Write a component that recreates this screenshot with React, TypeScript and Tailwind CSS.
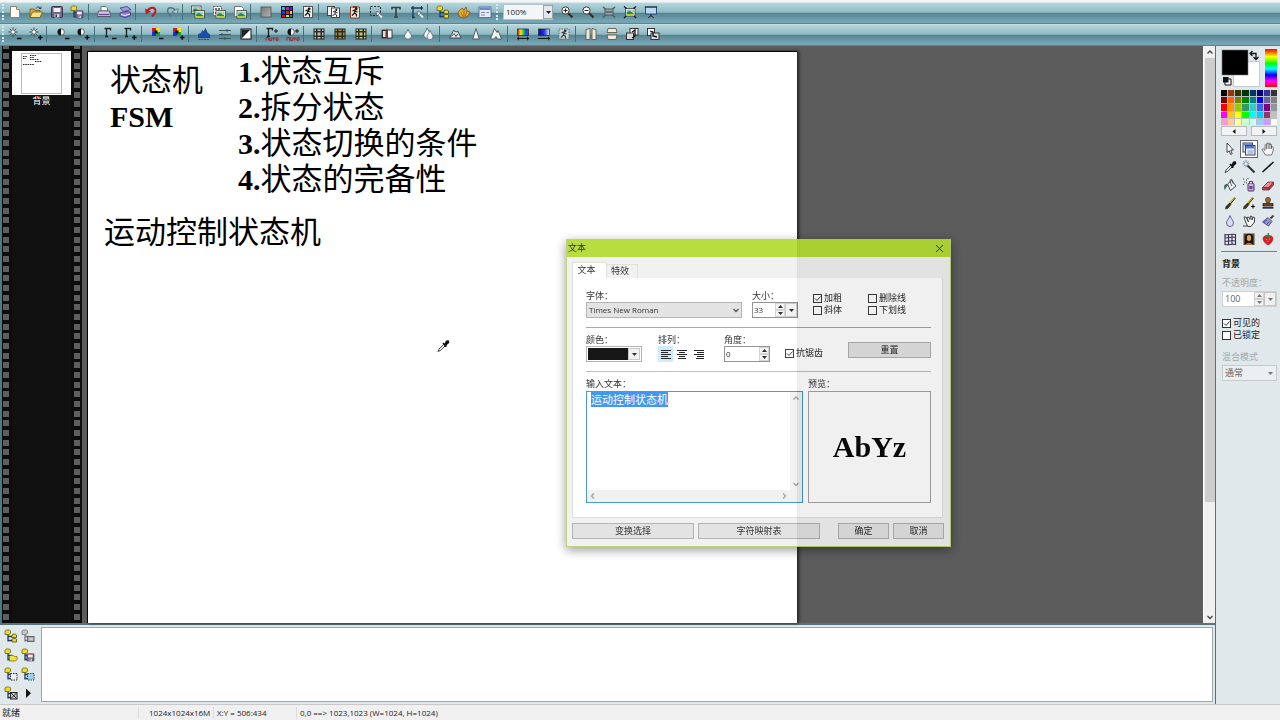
import React, { useEffect, useRef } from 'react';
import clsx from 'clsx';

/* ---------- small shared glyph parts (14x14 grid) ---------- */

const Doc = () => (
  <>
    <path d="M2.5 1.5h6l3 3v8h-9z" fill="#fbfaf3" stroke="#8b8772" />
    <path d="M8.500 1.500v3h3" fill="#e4e0cc" stroke="#8b8772" />
  </>
);

const Landscape = ({ x = 4, y = 5 }: { x?: number; y?: number }) => (
  <g transform={`translate(${x} ${y})`}>
    <rect width="9.500" height="7.500" fill="#fff" stroke="#39422e" strokeWidth=".8" />
    <rect x="1" y="1" width="7.500" height="3" fill="#8cc3ea" />
    <path d="M1 4l3-1.500L8.500 5v1.500H1z" fill="#2f8a35" />
    <path d="M1 5.500h7.500v1H1z" fill="#b8cf3a" />
    <circle cx="6.500" cy="2.200" r=".8" fill="#ffe14d" />
  </g>
);

const Floppy = ({ x = 1, y = 1, s = 1 }: { x?: number; y?: number; s?: number }) => (
  <g transform={`translate(${x} ${y}) scale(${s})`}>
    <rect x=".5" y=".5" width="11" height="11" rx="1" fill="#6d6585" stroke="#3b3450" />
    <rect x="2.500" y="1" width="7" height="5" fill="#f5eeee" />
    <path d="M2.500 1.500h7" stroke="#b04a4a" />
    <rect x="3.500" y="8" width="5" height="3.500" fill="#d5d5de" />
    <rect x="4.500" y="8.500" width="1.500" height="2.500" fill="#3b3450" />
  </g>
);

const Branch = ({ gray = false }: { gray?: boolean }) => (
  <>
    <path d="M4 5v7.500M4 7.500h4M4 11.500h4" stroke={gray ? '#777' : '#1c3a63'} fill="none" strokeWidth="1.300" />
    <path d="M1 2l1.500-1h3l1 1v2.500L5 5.500H1z" fill={gray ? '#c5c5c5' : '#f0dc28'} stroke={gray ? '#777' : '#6c6310'} strokeWidth=".8" />
  </>
);

const Runner = () => (
  <g fill="none" stroke="#111" strokeWidth="1.100">
    <circle cx="8.200" cy="3.800" r=".8" fill="#111" />
    <path d="M4.500 6l2-1 1.500 1.500 1.500.5M7 5.500L6.500 8l2 1.500v2M6.500 8L4 10.500" />
  </g>
);

const Grid = ({ c }: { c: string }) => (
  <>
    <rect x="1.500" y="1.500" width="11" height="11" fill="#2b2b20" />
    <path d="M2.500 2.500h1.500v1.500H2.500zM5.500 2.500h3v1.500h-3zM10 2.500h1.500v1.500H10zM2.500 5.500h1.500v3H2.500zM5.500 5.500h3v3h-3zM10 5.500h1.500v3H10zM2.500 10h1.500v1.500H2.500zM5.500 10h3v1.500h-3zM10 10h1.500v1.500H10z" fill={c} />
  </>
);

const Quad = () => (
  <>
    <path d="M2 1h4v4H2z" fill="#d91616" /><path d="M6 1h4v4H6z" fill="#f5e021" />
    <path d="M2 5h4v4H2z" fill="#1b2fe0" /><path d="M6 5h4v4H6z" fill="#19a32a" />
    <path d="M4.500 3.500h3v3h-3z" fill="#111" />
  </>
);

const Minus = () => <path d="M9 11.500h4.500" stroke="#0b1416" strokeWidth="1.500" />;
const Plus = () => <path d="M9 10.500h4.500M11.250 8.200v4.600" stroke="#0b1416" strokeWidth="1.500" />;

const Sun = () => (
  <>
    <circle cx="5" cy="5" r="2.200" fill="#fff" stroke="#222" strokeWidth=".7" />
    <path d="M5 .5v1.300M5 8.200v1.300M.5 5h1.300M8.200 5h1.300M1.800 1.800l.9.9M7.300 7.300l.9.9M1.800 8.200l.9-.9M7.300 2.700l.9-.9" stroke="#222" strokeWidth=".9" />
  </>
);

const Half = () => (
  <>
    <circle cx="5" cy="5" r="3.300" fill="#fff" stroke="#111" strokeWidth=".6" />
    <path d="M5 1.700a3.300 3.300 0 0 0 0 6.600z" fill="#111" />
  </>
);

const Gamma = () => <path d="M1.500 1.500h6v2M3.500 1.500v8M2 9.500h3" fill="none" stroke="#1b2426" strokeWidth="1.400" />;

const Auto = () => <path d="M1 10.500h2.500v3M1 10.500v3M4.700 10.500v3h2v-3M7.500 11h2.500M8.700 11v2.500M11 10.800h2v2.500h-2z" fill="none" stroke="#9c1f2c" strokeWidth=".9" />;

const Lens = () => (
  <>
    <path d="M8 8l4.500 4.500" stroke="#3c2d14" strokeWidth="2.200" />
    <circle cx="5.500" cy="5.500" r="3.600" fill="#fbfdff" stroke="#3c3c3c" />
  </>
);

const Drop = () => <path d="M7 1.500C8 5 10.500 6.500 10.500 9a3.500 3.500 0 0 1-7 0C3.500 6.500 6 5 7 1.500z" fill="#f2f5f5" stroke="#495a60" strokeWidth=".8" />;

const Brush = () => (
  <>
    <path d="M12 1.500L6.500 8" stroke="#b5a832" strokeWidth="2" />
    <path d="M12.500 2L7 8.500" stroke="#1c1c1c" strokeWidth=".8" />
    <path d="M6.500 7l1.500 1.500-3 3.800-2.500.7.500-2.500z" fill="#3a3414" stroke="#111" strokeWidth=".5" />
  </>
);

const glyphs: Record<string, React.ReactNode> = {
  new: <Doc />,
  open: <><path d="M1 4h4l1 1.500h5v7H1z" fill="#d9a938" stroke="#73571a" strokeWidth=".8" /><path d="M1 12.500L3.500 7h10L11 12.500z" fill="#fbe07e" stroke="#73571a" strokeWidth=".8" /><path d="M7 3.500c1-2 3.500-2 4.500 0M10 3.500h2v-2" fill="none" stroke="#222" strokeWidth=".8" /></>,
  save: <Floppy />,
  saveTree: <><Branch /><Floppy x={5.500} y={5.500} s={0.65} /></>,
  print: <><path d="M4 6V1.500h5L10.500 3v3z" fill="#fff" stroke="#555" strokeWidth=".8" /><path d="M1.500 6h11l1 5.500H.5z" fill="#d6cfe3" stroke="#4b3f62" strokeWidth=".8" /><path d="M2 9.500h10" stroke="#6c4a93" strokeWidth="1.500" /></>,
  scan: <><path d="M2 3l7-1.500 4 3L6 6.500z" fill="#a79be0" stroke="#46358b" strokeWidth=".8" /><path d="M2 8l5-1.500 5.500.5v3.500L7 12.500 2 11z" fill="#8a79cc" stroke="#46358b" strokeWidth=".8" /><path d="M3 9.500l4 1 5-1.500" stroke="#fff" fill="none" strokeWidth=".9" /></>,
  undo: <><path d="M3.500 6.500C5 2 11 1.500 11.500 5.500c.3 2.500-2 4-3.500 6" fill="none" stroke="#c01820" strokeWidth="1.900" /><path d="M1 3.500l.8 5.500L7 6.800z" fill="#c01820" /></>,
  redo: <><path d="M10.500 6.500C9 2 3 1.500 2.500 5.500c-.3 2.500 2 4 3.500 6" fill="none" stroke="#54757f" strokeWidth="1.400" /><path d="M13 3.500L12.200 9 7 6.800z" fill="#b4cdd4" stroke="#54757f" strokeWidth=".8" /></>,
  pics: <><Landscape x={0.5} y={1} /><Landscape x={4} y={5.500} /></>,
  picGrid: <><path d="M1.500 1.500h8v9h-8z" fill="#fff" stroke="#555" strokeDasharray="2 1" /><path d="M3 3h2v2H3zM6 3h2v2H6zM3 7h2v2H3z" fill="#667" /><Landscape x={4} y={5.500} /></>,
  picDoc: <><path d="M1.500 1.500h7l2 2v8h-9z" fill="#fff" stroke="#777" /><Landscape x={4} y={5.500} /></>,
  shade: <><defs><linearGradient id="shade" x1="0" y1="0" x2="1" y2="1"><stop stopColor="#777" /><stop offset="1" stopColor="#b5b5b5" /></linearGradient></defs><rect x="2" y="2" width="10" height="10" fill="url(#shade)" stroke="#4c5255" strokeWidth=".8" /></>,
  palette: <><rect x="1" y="1" width="12" height="12" fill="#14142c" /><path d="M2 2h3v3H2z" fill="#20c2c8" /><path d="M6 2h3v3H6z" fill="#d5188b" /><path d="M10 2h2v3h-2z" fill="#2434d8" /><path d="M2 6h3v3H2z" fill="#2434d8" /><path d="M6 6h3v3H6z" fill="#e22020" /><path d="M10 6h2v3h-2z" fill="#f0d820" /><path d="M2 10h3v2H2z" fill="#c21a1a" /><path d="M6 10h3v2H6z" fill="#e8d820" /><path d="M10 10h2v2h-2z" fill="#22a832" /></>,
  runner: <><rect x="2.500" y="1.500" width="9" height="11" fill="#eee" stroke="#555" /><Runner /></>,
  runCopy: <><rect x=".5" y="1.500" width="7" height="9" fill="#eee" stroke="#444" /><rect x="4.500" y="3" width="8" height="9.500" fill="#fff" stroke="#444" /><g transform="translate(2 1.500) scale(.9)"><Runner /></g></>,
  runPaste: <><path d="M2.500 2h9v11h-9z" fill="#f2dfcf" stroke="#8b3c26" /><path d="M5 1h4v2H5z" fill="#8b3c26" /><Runner /></>,
  marquee: <><rect x="1.500" y="1.500" width="10" height="9" fill="none" stroke="#1c2c33" strokeDasharray="2 1.500" /><path d="M8.500 8l4.500 4.500" stroke="#e4e9ea" strokeWidth="1.800" /><path d="M7 6.500l4.500 1L8 11z" fill="#e4e9ea" stroke="#334" strokeWidth=".5" /></>,
  text: <path d="M3 4.500V2.500h8v2M7 2.500v9.500M5 12h4" fill="none" stroke="#33454b" strokeWidth="1.700" />,
  crop: <><path d="M3 1v12M1 3h12M2 12.500h3" stroke="#17384d" fill="none" strokeWidth="1.300" /><path d="M11.500 1v4" stroke="#17384d" /><path d="M8.500 8l4.500 4.500" stroke="#e4e9ea" strokeWidth="1.800" /><path d="M7 6.500l4.500 1L8 11z" fill="#e4e9ea" stroke="#334" strokeWidth=".5" /></>,
  tree: <><Branch /><path d="M8 6l1-.8h2.500l1 .8v2.700H8zM8 10.300l1-.8h2.500l1 .8v2.700H8z" fill="#f0dc28" stroke="#4d4708" strokeWidth=".8" /></>,
  shell: <><path d="M1 8c1-4 4-3 4-5l2 2 2-3 1 4 3 1-2 4-4 2-4-1z" fill="#efac35" stroke="#7b4e11" strokeWidth=".8" /><path d="M7 5v7M4 7l2 5M10 6l-2 6" stroke="#8b5a16" strokeWidth=".8" /></>,
  window: <><rect x="1" y="2" width="12" height="10.500" fill="#e7ecf8" stroke="#4b5f94" strokeWidth=".8" /><path d="M1.400 2.400h11.200v2.600H1.400z" fill="#6b8ad2" /><path d="M3 7.500h4M3 10h4M8.500 7.500h2.500" stroke="#7a89ab" /></>,
  zoomIn: <><Lens /><path d="M3.500 5.500h4M5.500 3.500v4" stroke="#222" /></>,
  zoomOut: <><Lens /><path d="M3.500 5.500h4" stroke="#222" /></>,
  fit: <><rect x="3" y="4" width="8" height="6" fill="#98a8ac" stroke="#4c5a5e" /><path d="M1 2l2.500 2M13 2l-2.500 2M1 12.500L3.500 10M13 12.500L10.500 10M4 7h6" stroke="#4c5a5e" strokeWidth="1.400" /></>,
  fitPic: <><Landscape x={2.500} y={3.500} /><path d="M1 1.500l2.500 2M13 1.500l-2.500 2M1 13l2-2M13 13l-2-2" stroke="#213" strokeWidth="1.300" /></>,
  screen: <><rect x="1.500" y="2" width="11" height="7" fill="#b8d8f4" stroke="#2c4a86" /><path d="M7 9v3M4 13l3-2.500L10 13M.8 2h12.400" stroke="#2b2b2b" fill="none" /></>,
  sunMinus: <><Sun /><Minus /></>,
  sunPlus: <><Sun /><Plus /></>,
  halfMinus: <><Half /><Minus /></>,
  halfPlus: <><Half /><Plus /></>,
  gammaMinus: <><Gamma /><Minus /></>,
  gammaPlus: <><Gamma /><Plus /></>,
  quadMinus: <><Quad /><Minus /></>,
  quadPlus: <><Quad /><Plus /></>,
  histogram: <><path d="M1.500 10.500V7.500L3 6.500l1 .5 1.500-3.500L7 5l1.500-3.500L10 5.500l2.500 2v3z" fill="#174fae" stroke="#0f3270" strokeWidth=".6" /><path d="M1.500 12.500h11" stroke="#3c4d55" strokeDasharray="2 .8" /></>,
  sliders: <path d="M1 3.500h12M1 7.500h12M1 11.500h12M9 2v3M4 6v3M7 10v3" stroke="#3d545c" fill="none" />,
  invert: <><rect x="2" y="2" width="10" height="10" fill="#fff" stroke="#111" /><path d="M2.500 2.500h9l-9 9z" fill="#222" /></>,
  gammaAuto: <><Gamma /><path d="M9 4h4M11 2v4" stroke="#111" /><Auto /></>,
  halfAuto: <><Half /><path d="M9 4h4M11 2v4" stroke="#111" /><Auto /></>,
  gridWhite: <Grid c="#b9c2c0" />,
  gridTan: <Grid c="#a58a48" />,
  gridOlive: <Grid c="#c4c683" />,
  split: <><rect x="2" y="3" width="4.500" height="8" fill="#444" stroke="#222" strokeWidth=".8" /><rect x="7.500" y="3" width="4.500" height="8" fill="#f6f6f6" stroke="#222" strokeWidth=".8" /><rect x="3" y="4" width="2.500" height="6" fill="#d9dede" /><path d="M7 1.500v11" stroke="#b33a14" /></>,
  drop: <g transform="translate(0 1) scale(1 .9)"><Drop /></g>,
  drops: <><g transform="translate(-1.500 -.5) scale(.95)"><Drop /></g><g transform="translate(2 2) scale(.85)"><Drop /></g></>,
  soften: <path d="M1.500 11L3.500 7.500l2-4L8 5l2-.5 3 6.500zM3.500 9.500L6 6.500l2 3 2-2.500" fill="#e8ecec" stroke="#2f3c40" strokeWidth=".9" />,
  sharpen: <path d="M7 1.500l3.200 10.500H3.800z" fill="#f2f4f4" stroke="#46555a" strokeWidth=".9" />,
  sharpen2: <path d="M5.500 1.500l2.500 4 1-2 3.500 8.500H8.500L7 9.500 5 12H1.500z" fill="#f2f4f4" stroke="#46555a" strokeWidth=".9" />,
  hue: <><defs><linearGradient id="hue"><stop stopColor="#e11" /><stop offset=".3" stopColor="#fe1" /><stop offset=".55" stopColor="#1c4" /><stop offset=".8" stopColor="#14e" /><stop offset="1" stopColor="#c1d" /></linearGradient></defs><rect x="1.500" y="2" width="11" height="6.500" fill="url(#hue)" stroke="#222" strokeWidth=".7" /><path d="M1 11.500h12M3 9.800L1.200 11.500 3 13.200M11 9.800l1.800 1.700L11 13.200" stroke="#111" fill="none" /></>,
  blueRamp: <><defs><linearGradient id="ramp"><stop stopColor="#0a10a8" /><stop offset=".5" stopColor="#1a2fe8" /><stop offset="1" stopColor="#e6eaff" /></linearGradient></defs><rect x="1.500" y="2" width="11" height="6.500" fill="url(#ramp)" stroke="#222" strokeWidth=".7" /><path d="M1 11.500h12M11 9.800l1.800 1.700L11 13.200" stroke="#111" fill="none" /></>,
  effect: <><rect x="2" y="2" width="10" height="10" fill="#c9d6da" stroke="#5c6c72" strokeDasharray="1.500 1" /><g opacity=".8"><Runner /></g></>,
  flipH: <path d="M2 2.500l4-1v11H2zM8 1.500l4 1v10H8z" fill="#efecdf" stroke="#625c48" strokeWidth=".9" />,
  flipV: <path d="M3 1.500h8l1 4H2zM2 8h10l-1 4.500H3z" fill="#efecdf" stroke="#625c48" strokeWidth=".9" />,
  rotL: <><rect x="5" y="1.500" width="8" height="6.500" fill="#fff" stroke="#333" /><rect x="1.500" y="6" width="7" height="6.500" fill="#ddd" stroke="#333" /><path d="M7 5l3-2v6L7 11" fill="none" stroke="#111" strokeWidth="1.300" /></>,
  rotR: <><rect x="1.500" y="1.500" width="7" height="7" fill="#fff" stroke="#333" /><rect x="5" y="6" width="8" height="6.500" fill="#ddd" stroke="#333" /><path d="M4 4l3 1v4l4 1" fill="none" stroke="#111" strokeWidth="1.300" /></>,
  arrow: <path d="M4 1l6.500 7H7.700l1.500 3.800-1.500.7L6.200 8.800 4 10.500z" fill="#fff" stroke="#333" strokeWidth=".9" />,
  objects: <><rect x="1" y="1" width="9.500" height="9" fill="#dfe6f6" stroke="#35477c" /><path d="M1.500 1.500H10v2H1.500z" fill="#6d88cc" /><rect x="3.500" y="3.500" width="9.500" height="9.500" fill="#e9eefb" stroke="#35477c" /><path d="M4 4h8.500v2.500H4z" fill="#5876c2" /><path d="M5.500 9h6M5.500 11h6" stroke="#8898c0" /></>,
  hand: <path d="M4.500 13L1.200 8c-.5-1 .8-1.700 1.600-.6L4 8.500V3.500c0-1.200 1.500-1.200 1.500 0V2c0-1.200 1.700-1.200 1.700 0v-.2c0-1.200 1.700-1.200 1.700 0V3c0-1.200 1.600-1.200 1.600 0v2.500c0-1.200 1.700-1.200 1.700 0V9l-1.700 4zM5.500 3.500V7M7.200 2v5M8.900 2v5M10.500 4v3" fill="#f8f8f8" stroke="#555" strokeWidth=".8" />,
  dropper: <><path d="M2 12.500l1-2.500L8 5l1.500 1.500-5 5z" fill="#e9e9e9" stroke="#222" strokeWidth=".8" /><path d="M7 4l3.500 3.500M9 6l1.500-3.500L12 2l.5 1.500-3.500 3z" stroke="#111" strokeWidth="1.600" fill="#111" /></>,
  wand: <><path d="M5.500 5.500l7 7" stroke="#26323a" strokeWidth="2" /><path d="M4 0v7.500M.5 3.800h7M1.500 1.300l5 5M6.500 1.300l-5 5" stroke="#5b6f9c" strokeWidth=".8" /><circle cx="4" cy="3.800" r="1.200" fill="#fff" /></>,
  line: <path d="M1.500 12L12.500 2" stroke="#111" strokeWidth="1.500" />,
  bucket: <><path d="M4.500 6l4-3.500L13 8l-5.500 4.500z" fill="#eef2f3" stroke="#333" strokeWidth=".9" /><path d="M9 8C7 5 6.500 1.500 8 1.200S10 4 10 5.500" fill="none" stroke="#333" strokeWidth=".8" /><path d="M4.500 6C1 6 .8 8 1.500 12c1.500-1 1.500-4 4-4.500" fill="#35695e" /></>,
  spray: <><rect x="6" y="5.500" width="6" height="7.500" rx="1" fill="#c6b0d8" stroke="#4a2c5e" /><path d="M7.500 5.500v-2h3v2" fill="#fff" stroke="#4a2c5e" /><path d="M7.500 8h3v3h-3z" fill="#6e3d91" /><path d="M1 1h1M4 2h1M2 4h1M4 5h1M1 6.500h1M5.500.5h1" stroke="#333" /></>,
  eraser: <><path d="M1.500 9.500L7 4h5.500L8 9.500z" fill="#e48f95" stroke="#7c2b31" strokeWidth=".8" /><path d="M1.500 9.500H8v2.500H1.500zM8 12l4.500-5V4L8 9.500z" fill="#b0454e" stroke="#7c2b31" strokeWidth=".8" /></>,
  brush: <Brush />,
  brushPlus: <><g transform="translate(-1 0)"><Brush /></g><path d="M9 10.500h4M11 8.500v4" stroke="#111" strokeWidth="1.200" /></>,
  stamp: <><path d="M5.500 6.500C3.500 3 5 1.500 7 1.500s3.500 1.500 1.500 5z" fill="#9a6a3a" stroke="#3c2610" strokeWidth=".8" /><path d="M2 7.500h10v2.500H2z" fill="#6e4a24" stroke="#2c1c0c" strokeWidth=".8" /><path d="M1.500 11.800h11" stroke="#2a3152" strokeWidth="1.800" /></>,
  blur: <path d="M7 1.500C8 5 10.500 6.500 10.500 9a3.500 3.500 0 0 1-7 0C3.500 6.500 6 5 7 1.500z" fill="#dcdcf8" stroke="#5a568f" strokeWidth=".9" />,
  smudge: <><path d="M2 3l2 6 2 3.500h3L12.500 8V3.500L11 3l-1 3V2.500L8.500 2 8 5.500 6.500 3l-1.500.5L6.500 8 4 3z" fill="#f6f6f6" stroke="#333" strokeWidth=".9" /><path d="M1 12h5" stroke="#333" strokeWidth=".9" /></>,
  sweep: <><path d="M9.500 4.500l3-3" stroke="#5a4420" strokeWidth="2" /><path d="M7 3.500l4 4L7.500 12 1.500 8z" fill="#9b97dc" stroke="#36317c" strokeWidth=".8" /><path d="M3 8.500l3-2.500M5.500 10.500l3-3" stroke="#36317c" strokeWidth=".8" /></>,
  mesh: <path d="M2 2.500c3 1 7-1 10.500 0v10c-3-1-7 1-10.500 0zM2 5.500c3 1 7-1 10.500 0M2 9c3 1 7-1 10.500 0M5.500 2.700v10M9 2.200v10" fill="#e6e6f0" stroke="#35304e" strokeWidth="1.100" />,
  portrait: <><rect x="1.500" y="1.500" width="11" height="11.500" fill="#5a4a2c" /><path d="M3 12V5c0-4.500 8-4.500 8 0v7z" fill="#1d1109" /><ellipse cx="7" cy="6" rx="2.200" ry="3" fill="#d8a868" /><path d="M3.500 13c1-3 6-3 7 0z" fill="#b47c40" /></>,
  berry: <><path d="M7 13C3 11 1.500 7.500 2.500 5 4 3 10 3 11.500 5c1 2.500-.5 6-4.500 8z" fill="#dc1f26" stroke="#8e0f14" strokeWidth=".6" /><path d="M3.500 4L7 5.200 10.500 4 8 3V1H6.500v2z" fill="#2f8a2f" /><path d="M5 7.500h.8M8 7h.8M6.500 9.500h.8" stroke="#ffd5a0" /></>,
  treeOff: <><Branch gray /><rect x="6.500" y="7.500" width="6.500" height="5" fill="#aaa" stroke="#666" /><path d="M8 10h4" stroke="#eee" /></>,
  treeOpen: <><Branch /><path d="M5.500 8.500l1-1h3l1 1H13v3l-1.500 1.500H5.500z" fill="#f0e13c" stroke="#7d7110" strokeWidth=".8" /></>,
  treeDash: <><Branch /><rect x="6.500" y="6.500" width="6.500" height="6.500" fill="#eef1f2" stroke="#222" strokeDasharray="1.500 1" /></>,
  treeSel: <><Branch /><rect x="6.500" y="6.500" width="6.500" height="6.500" fill="#9fd0ee" stroke="#1d4c70" strokeDasharray="1.500 1" /></>,
  treeX: <><Branch /><rect x="6.500" y="6.500" width="6.500" height="6.500" fill="#ccc" stroke="#222" /><path d="M7 7l5.500 5.500M12.500 7L7 12.500" stroke="#222" /></>,
  play: <path d="M5 2.500v9.500l5-4.700z" fill="#111" />,
};

const Icon = ({ name }: { name: string }) => (
  <svg viewBox="0 0 14 14" className="size-3.5 shrink-0" aria-hidden="true">{glyphs[name]}</svg>
);

/* ---------- data ---------- */

const FILE_BAR = [
  'new', 'open', 'save', 'saveTree', '|', 'print', 'scan', '|', 'undo', 'redo', '|',
  'pics', 'picGrid', 'picDoc', '|', 'shade', 'palette', 'runner', '|',
  'runCopy', 'runPaste', 'marquee', 'text', 'crop', '|', 'tree', 'shell', 'window',
];

const ZOOM_BAR = ['zoomIn', 'zoomOut', 'fit', 'fitPic', 'screen'];

const ADJUST_BAR = [
  'sunMinus', 'sunPlus', '|', 'halfMinus', 'halfPlus', '|', 'gammaMinus', 'gammaPlus', '|',
  'quadMinus', 'quadPlus', '|', 'histogram', 'sliders', 'invert', '|', 'gammaAuto', 'halfAuto', '|',
  'gridWhite', 'gridTan', 'gridOlive', '|', 'split', 'drop', 'drops', '|',
  'soften', 'sharpen', 'sharpen2', '|', 'hue', 'blueRamp', 'effect', '|',
  'flipH', 'flipV', 'rotL', 'rotR',
];

const TOOLS = [
  'arrow', 'objects', 'hand', 'dropper', 'wand', 'line', 'bucket', 'spray', 'eraser',
  'brush', 'brushPlus', 'stamp', 'blur', 'smudge', 'sweep', 'mesh', 'portrait', 'berry',
];

const LAYER_TOOLS = ['tree', 'treeOff', 'treeOpen', 'saveTree', 'treeDash', 'treeSel', 'treeX', 'play'];

const SWATCHES = [
  'bg-[#000000]', 'bg-[#993300]', 'bg-[#333300]', 'bg-[#003300]', 'bg-[#003366]', 'bg-[#000080]', 'bg-[#333399]', 'bg-[#333333]',
  'bg-[#800000]', 'bg-[#ff6600]', 'bg-[#808000]', 'bg-[#008000]', 'bg-[#008080]', 'bg-[#0000ff]', 'bg-[#666699]', 'bg-[#808080]',
  'bg-[#ff0000]', 'bg-[#ff9900]', 'bg-[#99cc00]', 'bg-[#339966]', 'bg-[#33cccc]', 'bg-[#3366ff]', 'bg-[#800080]', 'bg-[#969696]',
  'bg-[#ff00ff]', 'bg-[#ffcc00]', 'bg-[#ffff00]', 'bg-[#00ff00]', 'bg-[#00ffff]', 'bg-[#00ccff]', 'bg-[#993366]', 'bg-[#c0c0c0]',
  'bg-[#ff99cc]', 'bg-[#ffcc99]', 'bg-[#ffff99]', 'bg-[#ccffcc]', 'bg-[#ccffff]', 'bg-[#99ccff]', 'bg-[#cc99ff]', 'bg-[#ffffff]',
];

/* ---------- small controls ---------- */

const Strip = ({ items }: { items: string[] }) => (
  <>
    {items.map((name, i) =>
      name === '|' ? (
        <span key={i} className="h-4 w-1.5 shrink-0 border-l border-[#46707c]" />
      ) : (
        <button key={i} aria-label={name} className="flex flex-1 items-center justify-center">
          <Icon name={name} />
        </button>
      )
    )}
  </>
);

const Grip = () => <span className="h-4 w-0.5 shrink-0 border-l-2 border-dotted border-[#d3e9ee]" />;

const Caret = ({ up = false }: { up?: boolean }) => (
  <svg viewBox="0 0 5 3" className="h-[3px] w-[5px]" aria-hidden="true">
    <path d={up ? 'M0 3h5L2.500 0z' : 'M0 0h5L2.500 3z'} fill="currentColor" />
  </svg>
);

const Chevron = ({ d }: { d: string }) => (
  <svg viewBox="0 0 8 8" className="size-2" aria-hidden="true">
    <path d={d} fill="none" stroke="currentColor" strokeWidth="1.300" />
  </svg>
);

const UP = 'M1.500 5.500L4 3l2.500 2.500';
const DOWN = 'M1.500 3L4 5.500 6.500 3';
const LEFT = 'M5 1.500L2.500 4 5 6.500';
const RIGHT = 'M3 1.500L5.500 4 3 6.500';

const Spin = () => (
  <span className="flex w-2.5 shrink-0 flex-col">
    <button aria-label="+" className="flex flex-1 items-center justify-center border border-[#d0d0d0] bg-[#f3f3f3]"><Caret up /></button>
    <button aria-label="-" className="flex flex-1 items-center justify-center border border-[#d0d0d0] bg-[#f3f3f3]"><Caret /></button>
  </span>
);

const DropButton = ({ label }: { label: string }) => (
  <button aria-label={label} className="flex w-3 shrink-0 items-center justify-center border border-[#c4c4c4] bg-[#f0f0f0]"><Caret /></button>
);

const Check = ({ label, checked = false }: { label: string; checked?: boolean }) => (
  <label className="flex h-3 items-center gap-0.5 whitespace-nowrap">
    <span className="grid size-[9px] shrink-0">
      <input
        type="checkbox"
        defaultChecked={checked}
        className="peer col-start-1 row-start-1 size-[9px] appearance-none border border-[#333] bg-white"
      />
      <svg viewBox="0 0 9 9" className="pointer-events-none invisible col-start-1 row-start-1 size-[9px] peer-checked:visible" aria-hidden="true">
        <path d="M2 4.500l2 2L7.500 2.500" fill="none" stroke="#333" />
      </svg>
    </span>
    {label}
  </label>
);

const PushButton = ({ children, className }: { children: React.ReactNode; className: string }) => (
  <button className={clsx('h-4 border border-[#adadad] bg-[#e1e1e1] text-center', className)}>{children}</button>
);

const AlignIcon = ({ d, active = false }: { d: string; active?: boolean }) => (
  <button aria-label="align" className={clsx('flex h-4 w-[15px] items-center justify-center', active && 'bg-[#cce8ff]')}>
    <svg viewBox="0 0 10 9" className="h-[9px] w-2.5" aria-hidden="true"><path d={d} stroke="#111" strokeWidth="1" /></svg>
  </button>
);

/* ---------- text dialog ---------- */

const TextDialog = () => {
  const input = useRef<HTMLTextAreaElement>(null);

  useEffect(() => {
    input.current?.focus();
    input.current?.select();
  }, []);

  return (
    <section
      role="dialog"
      aria-label="文本"
      className="absolute left-[566px] top-[239px] w-[385px] border border-t-0 border-[#b9cf72] bg-[#f0f0f0] pb-[7px] opacity-[.91] shadow-[0_3px_10px_rgba(0,0,0,0.45)]"
    >
      <header className="flex h-[18px] items-center justify-between bg-[#b1da2f] pl-px pr-1.5">
        <h2>文本</h2>
        <button aria-label="关闭">
          <svg viewBox="0 0 9 9" className="size-[9px]" aria-hidden="true"><path d="M1 1l7 7M8 1L1 8" stroke="#222" /></svg>
        </button>
      </header>

      <div className="pl-[5px] pr-1.5 pt-[5px]">
        <div role="tablist" className="flex h-4 items-end">
          <button role="tab" className="h-4 w-[35px] border border-b-0 border-[#dcdcdc] bg-white pb-0.5 pr-1.5 text-center">文本</button>
          <button role="tab" className="h-3.5 w-[31px] border border-b-0 border-l-0 border-[#dcdcdc] pb-0.5 pr-1 text-center">特效</button>
        </div>

        <div className="mr-px border border-t-0 border-[#dcdcdc] bg-white px-[13px] pb-3.5 pr-[11px] pt-3">
          {/* Font row */}
          <div className="flex h-7">
            <div className="flex w-[156px] flex-col">
              <label htmlFor="font" className="h-3">字体：</label>
              <div className="grid h-4 items-center">
                <select id="font" className="col-start-1 row-start-1 h-4 appearance-none border border-[#adadad] bg-[#e1e1e1] pl-0.5 text-[8px]">
                  <option>Times New Roman</option>
                </select>
                <span className="pointer-events-none col-start-1 row-start-1 justify-self-end pr-0.5 text-[#444]"><Chevron d={DOWN} /></span>
              </div>
            </div>
            <div className="ml-2.5 w-[46px]">
              <label htmlFor="size" className="block h-3">大小：</label>
              <div className="flex h-4 border border-[#8a8a8a]">
                <input id="size" defaultValue="33" className="w-0 flex-1 pl-px text-[8px] outline-none" />
                <Spin />
                <DropButton label="大小" />
              </div>
            </div>
            <div className="ml-[15px] w-[55px] pt-0.5">
              <Check label="加粗" checked />
              <Check label="斜体" />
            </div>
            <div className="pt-0.5">
              <Check label="删除线" />
              <Check label="下划线" />
            </div>
          </div>

          <hr className="mt-[9px] border-[#a0a0a0]" />

          {/* Colour and alignment row */}
          <div className="mt-1.5 flex h-7">
            <div className="w-14">
              <span className="block h-3">颜色：</span>
              <div className="flex h-4 border border-[#adadad] p-px">
                <button aria-label="颜色" className="flex-1 bg-black" />
                <DropButton label="颜色" />
              </div>
            </div>
            <div className="ml-4 w-12">
              <span className="block h-3">排列：</span>
              <div className="flex justify-between">
                <AlignIcon active d="M0 .5h10M0 2.500h7M0 4.500h10M0 6.500h7M0 8.500h10" />
                <AlignIcon d="M0 .5h10M2 2.500h6M0 4.500h10M2 6.500h6M1 8.500h8" />
                <AlignIcon d="M0 .5h10M3 2.500h7M0 4.500h10M3 6.500h7M2 8.500h8" />
              </div>
            </div>
            <div className="ml-[18px] w-[46px]">
              <label htmlFor="angle" className="block h-3">角度：</label>
              <div className="flex h-4 border border-[#8a8a8a]">
                <input id="angle" defaultValue="0" className="w-0 flex-1 pl-px text-[8px] outline-none" />
                <Spin />
              </div>
            </div>
            <div className="ml-[15px] pt-[13px]"><Check label="抗锯齿" checked /></div>
            <div className="ml-auto pt-2"><PushButton className="w-[83px]">重置</PushButton></div>
          </div>

          <hr className="mt-[9px] border-[#b8b8b8]" />

          {/* Input and preview */}
          <div className="mt-1.5 flex justify-between">
            <div className="w-[217px]">
              <label htmlFor="content" className="block h-[13px]">输入文本：</label>
              <div className="flex h-[112px] flex-col border border-[#3c8fd0]">
                <div className="flex flex-1">
                  <textarea
                    ref={input}
                    id="content"
                    defaultValue="运动控制状态机"
                    className="flex-1 resize-none overflow-hidden bg-white pl-1 pt-0.5 text-[11px] leading-3 outline-none selection:bg-[#2f8fee] selection:text-white"
                  />
                  <div className="flex w-3 flex-col items-center justify-between bg-[#f0f0f0] pb-0.5 pt-0.5 text-[#999]">
                    <Chevron d={UP} />
                    <Chevron d={DOWN} />
                  </div>
                </div>
                <div className="flex h-3 items-center justify-between bg-[#f0f0f0] pl-0.5 pr-3.5 text-[#999]">
                  <Chevron d={LEFT} />
                  <Chevron d={RIGHT} />
                </div>
              </div>
            </div>
            <div className="w-[123px]">
              <span className="block h-[13px]">预览：</span>
              <div className="flex h-[112px] items-center justify-center border border-[#a0a0a0] bg-white font-['Liberation_Serif',serif] text-[30px] font-bold text-black">
                AbYz
              </div>
            </div>
          </div>
        </div>

        <footer className="mt-[5px] flex">
          <PushButton className="w-[122px]">变换选择</PushButton>
          <PushButton className="ml-1 w-[122px]">字符映射表</PushButton>
          <PushButton className="ml-auto w-[51px]">确定</PushButton>
          <PushButton className="ml-1 w-[51px]">取消</PushButton>
        </footer>
      </div>
    </section>
  );
};

/* ---------- right tool panel ---------- */

const ToolPanel = () => (
  <aside className="w-16 shrink-0 bg-[#e1e8eb] pl-[5px] pr-[3px] pt-[3px]">
    <div className="flex h-[38px] justify-between">
      <svg viewBox="0 0 40 38" className="h-[38px] w-10" aria-hidden="true">
        <rect x="12.500" y="12.500" width="26" height="25" fill="#fff" stroke="#c4cbce" />
        <rect x="1" y="1" width="26" height="25" fill="#000" stroke="#777" strokeWidth=".6" />
        <path d="M30 4.500h5v5M31.500 2L29 4.500 31.500 7M32.500 8L35 10.500 37.500 8" fill="none" stroke="#111" strokeWidth="1.300" />
        <path d="M4 30h6v6H4z" fill="#fff" stroke="#111" />
        <path d="M2 28h5.500v5.500H2z" fill="#111" />
      </svg>
      <div className="w-3 bg-[linear-gradient(#f00,#ff0_20%,#0f0_38%,#0ff_52%,#00f_68%,#f0f_84%,#f00)]" />
    </div>

    <div className="mt-[3px] grid h-[35px] grid-cols-8 gap-px bg-[#b9bfc2]">
      {SWATCHES.map((c) => <button key={c} aria-label={c} className={c} />)}
    </div>

    <div className="mt-px grid grid-cols-2 gap-1">
      {[LEFT, RIGHT].map((d) => (
        <button key={d} aria-label="scroll" className="flex h-2.5 items-center justify-center border border-[#b4b9bb] bg-[#f1f3f4]">
          <svg viewBox="0 0 4 5" className="h-[5px] w-1" aria-hidden="true">
            <path d={d === LEFT ? 'M3.500 0v5L.5 2.500z' : 'M.5 0v5l3-2.500z'} fill="#111" />
          </svg>
        </button>
      ))}
    </div>

    <div className="mt-1 grid grid-cols-3 justify-items-center">
      {TOOLS.map((name) => (
        <button
          key={name}
          aria-label={name}
          className={clsx('flex size-[18px] items-center justify-center', name === 'objects' && 'border border-[#666] bg-white')}
        >
          <Icon name={name} />
        </button>
      ))}
    </div>

    <hr className="mt-[3px] border-[#5c8a91]" />

    <div className="pl-px">
      <h3 className="mt-1.5 h-3 font-bold">背景</h3>
      <label htmlFor="opacity" className="mt-[7px] block h-3 text-[#a3a8aa]">不透明度：</label>
      <div className="mt-0.5 flex h-4 border border-[#cfcfcf] bg-white text-[#777]">
        <input id="opacity" defaultValue="100" className="w-0 flex-1 pl-0.5 text-[#666] outline-none" />
        <Spin />
        <DropButton label="不透明度" />
      </div>
      <div className="mt-2.5">
        <Check label="可见的" checked />
        <Check label="已锁定" />
      </div>
      <label htmlFor="blend" className="mt-2.5 block h-3 text-[#a3a8aa]">混合模式</label>
      <div className="mt-0.5 grid h-4 items-center text-[#777]">
        <select id="blend" className="col-start-1 row-start-1 h-4 w-full appearance-none border border-[#c6cacb] bg-[#eceff0] pl-0.5 text-[#666]">
          <option>通常</option>
        </select>
        <span className="pointer-events-none col-start-1 row-start-1 justify-self-end pr-1"><Caret /></span>
      </div>
    </div>
  </aside>
);

/* ---------- film strip with the page thumbnails ---------- */

const Perforation = () => (
  <div className="w-1.5 bg-[repeating-linear-gradient(#5e5e5e_0_3px,#0c0c0c_3px_7px,#5e5e5e_7px_13px,#0c0c0c_13px_17px,#5e5e5e_17px_23px,#0c0c0c_23px_26px,#5e5e5e_26px_29px)]" />
);

const FilmStrip = () => (
  <div className="flex w-[82px] shrink-0 justify-between border-l-2 border-[#4d7985] bg-[#0c0c0c] pl-px pr-0.5">
    <Perforation />
    <div className="flex w-[59px] flex-col bg-[#111] pt-[5px]">
      <button aria-label="背景" className="flex h-11 justify-center bg-white pt-0.5">
        <svg viewBox="0 0 41 41" className="size-[41px]" aria-hidden="true">
          <rect x=".5" y=".5" width="40" height="40" fill="#fff" stroke="#b9b9b9" />
          <path d="M2 3.500h4M2 5.500h3M9 2.500h6M9 4.500h4M9 6.500h9M14 8.500h7M2 11.500h11" stroke="#222" strokeDasharray="1.500 .8" />
        </svg>
      </button>
      <span className="h-3 text-center text-white">背景</span>
    </div>
    <Perforation />
  </div>
);

/* ---------- document ---------- */

const CONDITIONS = ['状态互斥', '拆分状态', '状态切换的条件', '状态的完备性'];

const Canvas = () => (
  <div className="relative w-[710px] shrink-0 border-l border-t border-black bg-white font-['Liberation_Serif','Noto_Sans_CJK_SC',serif] text-[31px] leading-9 text-black shadow-[2px_0_3px_#222]">
    <div className="absolute left-[22px] top-[11px]">
      <p>状态机</p>
      <p className="text-[30px] font-bold">FSM</p>
    </div>
    <ol className="absolute left-[150px] top-0.5 whitespace-nowrap">
      {CONDITIONS.map((text, i) => (
        <li key={text}><span className="text-[30px] font-bold">{i + 1}.</span>{text}</li>
      ))}
    </ol>
    <p className="absolute left-4 top-[163px]">运动控制状态机</p>
    <span className="absolute left-[348px] top-[287px]"><Icon name="dropper" /></span>
  </div>
);

export default function App() {
  return (
    <div className="relative flex min-h-screen flex-col bg-[#f0f0f0] font-['Open_Sans','Noto_Sans_CJK_SC',sans-serif] text-[9px] leading-3 text-[#1a1a1a]">
      <div className="h-0.5 bg-[#f4f4f4]" />

      {/* Toolbars */}
      <nav className="flex h-[22px] items-center gap-px border-t border-[#d7e9ec] bg-[linear-gradient(#b5d6db,#8fb9c4_45%,#55828f_46%,#79a9b7_92%,#4c7985)] pb-[3px] pl-0.5">
        <Grip />
        <div className="flex w-[490px] items-center"><Strip items={FILE_BAR} /></div>
        <Grip />
        <div className="ml-1 grid h-4 w-[50px] items-center">
          <select aria-label="缩放" className="col-start-1 row-start-1 h-4 appearance-none border border-[#b3c5ca] bg-[#f2f6f7] pl-0.5 text-[8px]">
            <option>100%</option>
          </select>
          <span className="pointer-events-none col-start-1 row-start-1 flex h-3.5 w-2.5 items-center justify-center justify-self-end border border-[#98a5a9] bg-[#e4e8ea]"><Caret /></span>
        </div>
        <div className="ml-[3px] flex w-[104px] items-center"><Strip items={ZOOM_BAR} /></div>
      </nav>
      <nav className="flex h-[22px] items-center gap-px border-t border-[#c4dfe4] bg-[linear-gradient(#b5d6db,#8fb9c4_45%,#55828f_46%,#79a9b7_92%,#4c7985)] pb-[3px] pl-0.5">
        <Grip />
        <div className="flex w-[658px] items-center"><Strip items={ADJUST_BAR} /></div>
      </nav>

      <main className="flex flex-1">
        <div className="flex min-w-0 flex-1 flex-col border-r border-[#4b7480]">
          <div className="flex flex-1 border-b-2 border-[#55747d] bg-[#5c5c5c]">
            <FilmStrip />
            <div className="flex flex-1 pl-[5px] pt-[5px]"><Canvas /></div>
            <div className="flex w-3 flex-col items-center border-l border-white bg-[#f0f0f0] text-[#444]">
              <div className="flex h-3 items-center"><Chevron d={UP} /></div>
              <div className="w-2.5 flex-[15] bg-[#cdcdcd]" />
              <div className="flex flex-[4] items-end pb-0.5"><Chevron d={DOWN} /></div>
            </div>
          </div>

          <div className="flex h-[79px] bg-[#e1e8eb] pb-0.5 pr-0.5 pt-0.5">
            <div className="grid w-[41px] grid-cols-2 items-center justify-items-center pl-0.5 pr-1">
              {LAYER_TOOLS.map((name) => (
                <button key={name} aria-label={name}><Icon name={name} /></button>
              ))}
            </div>
            <div className="flex-1 border border-[#9aa8ad] bg-white" />
          </div>
        </div>
        <ToolPanel />
      </main>

      {/* Status bar */}
      <footer className="flex h-4 items-center border-t border-[#c9c9c9] bg-[#f0f0f0]">
        <span className="w-[139px] border-r border-[#dcdcdc] pl-0.5">就绪</span>
        <span className="w-[75px] border-r border-[#dcdcdc] pl-2.5 text-[8px]">1024x1024x16M</span>
        <span className="w-[83px] border-r border-[#dcdcdc] pl-[3px] text-[8px]">X:Y = 506:434</span>
        <span className="pl-[3px] text-[8px]">0,0 ==&gt; 1023,1023 (W=1024, H=1024)</span>
      </footer>

      <TextDialog />
    </div>
  );
}
